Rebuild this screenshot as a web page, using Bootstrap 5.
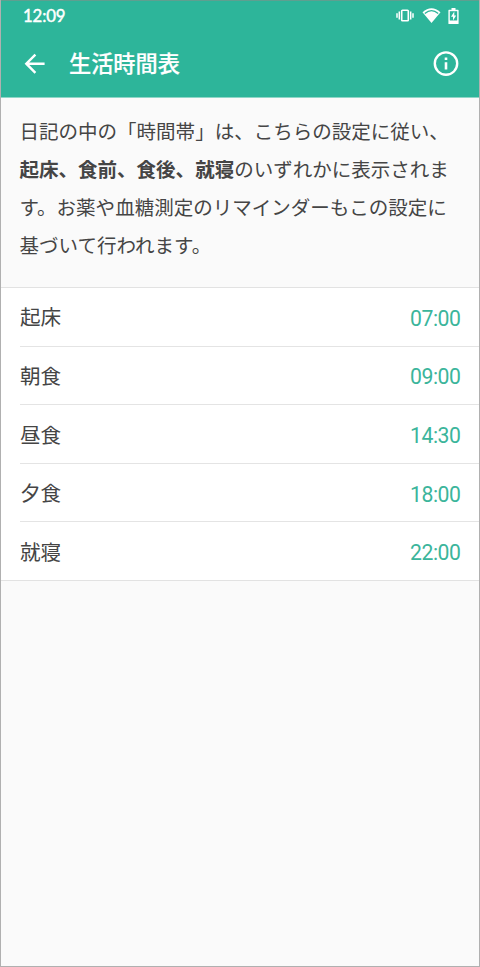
<!DOCTYPE html>
<html lang="ja">
<head>
<meta charset="utf-8">
<meta name="viewport" content="width=device-width, initial-scale=1">
<title>生活時間表</title>
<link href="https://cdn.jsdelivr.net/npm/bootstrap@5.3.0/dist/css/bootstrap.min.css" rel="stylesheet">
<style>
body{font-family:Roboto,"Noto Sans CJK JP",sans-serif;background:#fafafa;color:#454545}
.screen{height:967px;border:1px solid #b0b0b0;border-top:0;overflow:hidden}
.app-top{height:98px;background:#2db59a;border-top:1px solid #5f9f90;border-bottom:1px solid #8fd6c7;color:#fff}
.status{height:30px;padding:0 20px 0 22px}
.clock{font:400 16.8px/30px Lato,sans-serif;letter-spacing:-.15px;-webkit-text-stroke:.45px #fff}
.battery{margin-left:7px}
.title-bar{height:66px;padding:0 20px 0 20.5px}
.title-bar h1{font-size:22.2px;font-weight:500;line-height:66px;margin-left:21.5px;-webkit-text-stroke:.2px #fff}
.intro{font-size:19.52px;line-height:38.2px;padding:15.5px 19px 0 18.5px;height:189px;white-space:nowrap}
.times{background:#fff;border-top:1px solid #e2e2e2;border-bottom:1px solid #e2e2e2}
.time-row{height:58.6px;margin-left:19px;padding:4px 18.5px 0 0;font-size:20.6px;border-bottom:1px solid #e4e4e4}
.time-row:last-child{border-bottom:0;height:58px}
.time-row span:last-child{font-size:21.2px;letter-spacing:-.45px;color:#3bb59b}
</style>
</head>
<body>
<div class="screen">
  <header class="app-top">
    <div class="status d-flex align-items-center justify-content-between">
      <span class="clock">12:09</span>
      <div class="d-flex align-items-center">
        <svg width="18" height="16" viewBox="0 0 18 16" fill="none" stroke="#fff"><rect x="5.7" y="2.3" width="6.6" height="10.4" rx=".8" stroke-width="1.6"/><path d="M3.3 3.5v8M14.7 3.5v8M1 5.2v4.6M17 5.2v4.6" stroke-width="1.5"/></svg>
        <svg class="ms-2" width="19" height="16" viewBox="0 0 19 16"><path d="M.5 4.2Q9.5-3.5 18.5 4.2L9.5 15Z" fill="#fff"/><path d="M2.8 5.4Q9.5-.1 16.2 5.4" fill="none" stroke="#2db59a" stroke-width="1.3"/></svg>
        <svg class="battery" width="11" height="16" viewBox="0 0 11 16"><path d="M3.5 0h4v1.8H10q.6 0 .6.6v13q0 .6-.6.6H1q-.6 0-.6-.6v-13q0-.6.6-.6h2.5Z" fill="#fff"/><path d="M1.8 3.2h7.4v9.3H1.8Z" fill="#2db59a"/><path d="M6.3 3.6 3 8.8h2v3.8l3.2-5.2h-1.9Z" fill="#fff"/></svg>
      </div>
    </div>
    <div class="title-bar d-flex align-items-center">
      <svg width="26" height="26" viewBox="0 0 26 26" fill="none" stroke="#fff" stroke-width="2.4"><path d="M22.6 12.7H4.5M13.4 3.6 4.3 12.7l9.1 9.1"/></svg>
      <h1 class="mb-0">生活時間表</h1>
      <svg class="ms-auto" width="26" height="26" viewBox="0 0 26 26"><circle cx="13" cy="12.6" r="11.2" fill="none" stroke="#fff" stroke-width="2.4"/><path d="M11.7 6.6h2.6v2.5h-2.6zM11.7 11.3h2.6v7.3h-2.6z" fill="#fff"/></svg>
    </div>
  </header>
  <p class="intro mb-0">日記の中の「時間帯」は、こちらの設定に従い、<br><b>起床、食前、食後、就寝</b>のいずれかに表示されま<br>す。お薬や血糖測定のリマインダーもこの設定に<br>基づいて行われます。</p>
  <div class="times">
    <div class="time-row d-flex align-items-center justify-content-between"><span>起床</span><span>07:00</span></div>
    <div class="time-row d-flex align-items-center justify-content-between"><span>朝食</span><span>09:00</span></div>
    <div class="time-row d-flex align-items-center justify-content-between"><span>昼食</span><span>14:30</span></div>
    <div class="time-row d-flex align-items-center justify-content-between"><span>夕食</span><span>18:00</span></div>
    <div class="time-row d-flex align-items-center justify-content-between"><span>就寝</span><span>22:00</span></div>
  </div>
</div>
<script src="https://cdn.jsdelivr.net/npm/bootstrap@5.3.0/dist/js/bootstrap.bundle.min.js"></script>
</body>
</html>
